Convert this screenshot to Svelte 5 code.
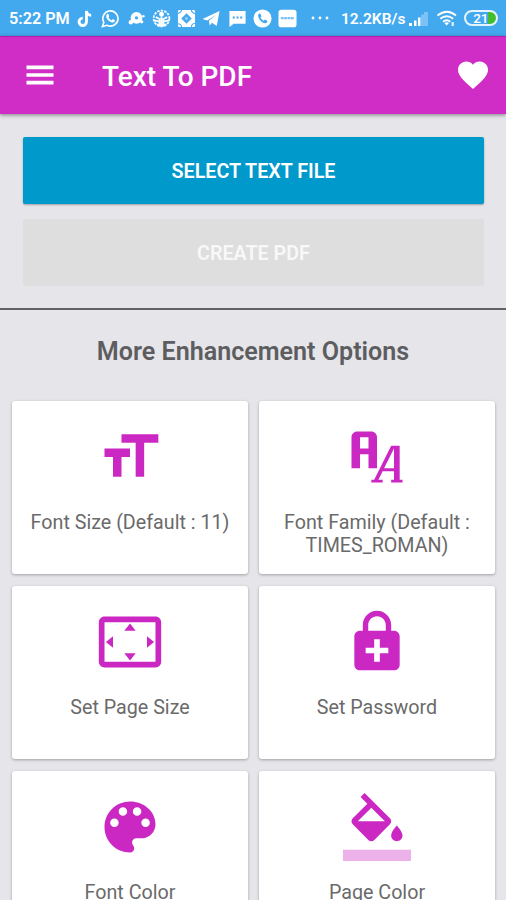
<script>
  const options = [
    {
      label: 'Font Size (Default : 11)',
      icon: 'M9 4v3h5v12h3V7h5V4H9zm-6 8h3v7h3v-7h3V9H3v3z'
    },
    {
      label: 'Font Family (Default : TIMES_ROMAN)',
      icon: 'M17 8H20V20H21V21H17V20H18V17H14L12.5 20H14V21H10V20H11L17 8M18 9L14.5 16H18V9M5 3H10C11.11 3 12 3.89 12 5V16H9V11H6V16H3V5C3 3.89 3.89 3 5 3M6 5V9H9V5H6Z'
    },
    {
      label: 'Set Page Size',
      icon: 'M12.01 5.5L10 8h4l-1.99-2.5zM18 10v4l2.5-1.99L18 10zM6 10l-2.5 2.01L6 14v-4zm8 6h-4l2.01 2.5L14 16zm7-13H3c-1.1 0-2 .9-2 2v14c0 1.1.9 2 2 2h18c1.1 0 2-.9 2-2V5c0-1.1-.9-2-2-2zm0 16.01H3V4.99h18v14.02z'
    },
    {
      label: 'Set Password',
      icon: 'M18 8h-1V6c0-2.76-2.24-5-5-5S7 3.24 7 6v2H6c-1.1 0-2 .9-2 2v10c0 1.1.9 2 2 2h12c1.1 0 2-.9 2-2V10c0-1.1-.9-2-2-2zM8.9 6c0-1.71 1.39-3.1 3.1-3.1s3.1 1.39 3.1 3.1v2H8.9V6zM16 16h-3v3h-2v-3H8v-2h3v-3h2v3h3v2z'
    },
    {
      label: 'Font Color',
      icon: 'M12 3c-4.97 0-9 4.03-9 9s4.03 9 9 9c.83 0 1.5-.67 1.5-1.5 0-.39-.15-.74-.39-1.01-.23-.26-.38-.61-.38-.99 0-.83.67-1.5 1.5-1.5H16c2.76 0 5-2.24 5-5 0-4.42-4.03-8-9-8zm-5.5 9c-.83 0-1.5-.67-1.5-1.5S5.67 9 6.5 9 8 9.67 8 10.5 7.33 12 6.5 12zm3-4C8.67 8 8 7.33 8 6.5S8.67 5 9.5 5s1.5.67 1.5 1.5S10.33 8 9.5 8zm5 0c-.83 0-1.5-.67-1.5-1.5S13.67 5 14.5 5s1.5.67 1.5 1.5S15.33 8 14.5 8zm3 4c-.83 0-1.5-.67-1.5-1.5S16.67 9 17.5 9s1.5.67 1.5 1.5-.67 1.5-1.5 1.5z'
    },
    {
      label: 'Page Color', bar: true,
      icon: 'M16.56 8.94L7.62 0 6.21 1.41l2.38 2.38-5.15 5.15c-.59.59-.59 1.54 0 2.12l5.5 5.5c.29.29.68.44 1.06.44s.77-.15 1.06-.44l5.5-5.5c.59-.58.59-1.53 0-2.12zM5.21 10L10 5.21 14.79 10H5.21zM19 11.5s-2 2.17-2 3.5c0 1.1.9 2 2 2s2-.9 2-2c0-1.33-2-3.5-2-3.5z'
    }
  ];
</script>

<div class="screen">
  <div class="status">
    <span class="time">5:22 PM</span>
    <div class="notes">
      <svg class="n" viewBox="0 0 20 20"><path d="M11 2c.4 3 2.100 4.700 5 4.700M11 2V13.500a3.900 3.900 0 1 1-3.900-3.900" fill="none" stroke="#fff" stroke-width="3" /></svg>
      <svg class="n" viewBox="0 0 20 20"><path d="M1.500 18.500 3 14a8 8 0 1 1 3.200 3.100z" fill="none" stroke="#fff" stroke-width="1.700" /><path d="M6.200 5.600c1-1 1.700-.5 2.400 1.700.1.600-.4.900-.8 1.500.7 1.500 1.800 2.400 3.400 3.200.6-.6.900-1.300 1.500-1.100 2.300 1 2.400 1.300 1.400 2.500-1.200 1.200-3 .9-5.300-.6C6.100 11 4.500 8.200 6.200 5.600z" fill="#fff" /></svg>
      <svg class="n" viewBox="0 0 20 20"><g fill="#fff"><circle cx="10" cy="9.300" r="6.200" /><circle cx="4" cy="14" r="2.300" /><circle cx="17.300" cy="7.500" r="1.300" /><circle cx="15.500" cy="13.500" r="1.700" /></g><circle cx="10" cy="9.300" r="1.800" fill="#43a9ef" /></svg>
      <svg class="n" viewBox="0 0 20 20"><circle cx="10" cy="10" r="8.300" fill="none" stroke="#fff" stroke-width="1.800" stroke-dasharray="2.600 1.200" /><circle cx="10" cy="5.600" r="2.600" fill="#fff" /><path d="M10 8v10M4 8.500l4 2V16M16 8.500l-4 2V16M2 12l5 1M18 12l-5 1" fill="none" stroke="#fff" stroke-width="1.900" /><path d="M4 15.500h12l-3 3H7z" fill="#fff" /></svg>
      <svg class="n" viewBox="0 0 20 20"><rect x="1" y="1" width="18" height="18" rx="1.500" fill="#fff" /><path d="M10 4.500 15.500 10 10 15.500 4.500 10z" fill="#43a9ef" /><path d="M10 8 12 10 10 12 8 10z" fill="#fff" opacity=".4" /><path d="M1 4.500Q4 4.500 5 1M15 1q.5 3 4 4M1 15.500q3 0 4 3.500M15 19q.5-3.500 4-4" fill="none" stroke="#43a9ef" stroke-width="1.100" /></svg>
      <svg class="n" viewBox="0 0 20 20"><path d="M.5 10.500 18.500 2 15.500 18l-5-3.500-2.300 2.800-1-5L15 6 5.500 12z" fill="#fff" /></svg>
      <svg class="n" viewBox="0 0 20 20"><path d="M1.500 2h17v13.500H6L1.500 19z" fill="#fff" /><path d="M5 9h2.200M8.900 9h2.200M12.800 9H15" stroke="#43a9ef" stroke-width="2" /></svg>
      <svg class="n" viewBox="0 0 20 20"><circle cx="10" cy="10" r="9.500" fill="#fff" /><path d="M5.500 5.800 7.500 4.600 9 7.500 7.800 9c.8 1.500 1.800 2.500 3.400 3.400l1.400-1.300 2.800 1.600-1.200 2C10.500 16.400 4.700 10.200 5.500 5.800z" fill="#43a9ef" /></svg>
      <svg class="n" viewBox="0 0 20 20"><rect x=".5" y=".8" width="19" height="18.400" rx="3" fill="#fff" /><path d="M3 9.500h14" stroke="#43a9ef" stroke-width="2.400" stroke-dasharray="3 .5" opacity=".7" /></svg>
    </div>
    <svg class="dots" viewBox="0 0 18 4"><g fill="#fff"><circle cx="2" cy="2" r="1.400" /><circle cx="9" cy="2" r="1.400" /><circle cx="16" cy="2" r="1.400" /></g></svg>
    <span class="speed">12.2KB/s</span>
    <svg class="signal" viewBox="0 0 20 16"><g fill="#fff"><rect x="0" y="12" width="3" height="3" /><rect x="5" y="9.500" width="2.500" height="5.500" /><rect x="9" y="6.500" width="2.500" height="8.500" /><rect x="12" y="3.500" width="3" height="11.500" opacity=".3" /><rect x="15" y="1" width="4" height="14" opacity=".3" /></g></svg>
    <svg class="wifi" viewBox="0 0 22 18"><g fill="none" stroke="#fff" stroke-width="1.900"><path d="M1.500 6.500q9.500-7.500 18.500 0" /><path d="M4.300 9.700q6.500-5 12.800 0" /><path d="M7 12.700q3.700-2.800 7.300 0" /></g><path d="M8.300 14q2.400-1.500 4.700 0l-2.300 2.600z" fill="#fff" /><path d="M16.700 13v4" stroke="#fff" stroke-width="2.400" opacity=".8" /></svg>
    <div class="battery"><span>21</span></div>
  </div>

  <header>
    <svg class="bar-icon menu" viewBox="0 0 24 24"><path d="M3 18.300h18v-2.500H3v2.500zm0-5.100h18v-2.400H3v2.400zm0-7.500v2.500h18V5.700H3z" fill="#fff" /></svg>
    <h1>Text To PDF</h1>
    <svg class="bar-icon heart" viewBox="0 0 24 24"><path d="M12 21.350l-1.450-1.320C5.400 15.360 2 12.280 2 8.500 2 5.420 4.420 3 7.500 3c1.740 0 3.410.81 4.500 2.090C13.090 3.810 14.760 3 16.500 3 19.580 3 22 5.420 22 8.500c0 3.780-3.400 6.860-8.550 11.540L12 21.350z" fill="#fff" /></svg>
  </header>

  <div class="actions">
    <button class="select">SELECT TEXT FILE</button>
    <button class="create" disabled>CREATE PDF</button>
  </div>

  <h2>More Enhancement Options</h2>

  <div class="grid">
    {#each options as option}
      <div class="card">
        <svg viewBox="0 0 24 24">
          <path fill-rule="evenodd" d={option.icon} />
          {#if option.bar}<path d="M0 20h24v4H0z" opacity=".36" />{/if}
        </svg>
        <p>{option.label}</p>
      </div>
    {/each}
  </div>
</div>

<style>
  :global(body) { margin: 0; overflow: hidden; }
  .screen {
    box-sizing: border-box;
    width: 506px;
    height: 900px;
    overflow: hidden;
    background: #e5e5ea;
    font-family: Roboto, 'Liberation Sans', sans-serif;
    color: #5c5c5e;
  }
  .status {
    display: flex;
    align-items: center;
    box-sizing: border-box;
    height: 36px;
    padding-left: 9px;
    background: #43a9ef;
    color: #fff;
    font-size: 16.200px;
    font-weight: 600;
    white-space: nowrap;
  }
  .time { width: 67px; padding-top: 1px; }
  .notes { display: flex; gap: 6.300px; }
  .n { width: 19px; height: 19px; flex: none; }
  .dots { width: 18px; height: 4px; margin-left: 14px; }
  .speed { width: 67px; margin-left: 11.500px; padding-top: 2px; font-size: 15.500px; }
  .signal { width: 20px; height: 16px; margin-left: 1px; margin-top: 1px; }
  .wifi { width: 22px; height: 18px; margin-left: 7px; }
  .battery {
    display: flex;
    align-items: center;
    justify-content: center;
    box-sizing: border-box;
    width: 34px;
    height: 16px;
    margin-left: 6px;
    border: 2px solid #e4f3fd;
    border-radius: 8px;
    background: linear-gradient(90deg, transparent 22px, #42bd2d 22px);
    font-size: 13.500px;
    font-weight: 500;
    line-height: 14px;
  }
  header {
    position: relative;
    display: flex;
    align-items: center;
    box-sizing: border-box;
    height: 78px;
    padding: 0 15px 0 22px;
    background: #cf2dc5;
    border-top: 1px solid #b51cae;
    box-shadow: 0 1px 4px rgba(0, 0, 0, .45);
  }
  .bar-icon { width: 36px; height: 36px; flex: none; }
  .menu { margin-bottom: 2px; }
  .heart { margin-bottom: 2px; }
  h1 {
    flex: 1;
    margin: 2px 0 0 44px;
    color: #fff;
    font-size: 28px;
    line-height: 34px;
    font-weight: 500;
  }
  .actions {
    display: flex;
    flex-direction: column;
    gap: 15px;
    box-sizing: border-box;
    height: 196px;
    padding: 23px 22px 0 23px;
    border-bottom: 2px solid #626266;
  }
  button {
    height: 67px;
    padding: 2px 0 0;
    border: 0;
    border-radius: 2px;
    color: #fff;
    font: 600 19.700px Roboto, 'Liberation Sans', sans-serif;
  }
  .select { background: #0099cc; box-shadow: 0 1px 2px rgba(0, 0, 0, .3); }
  .create { background: #dedede; color: #f8f8f8; }
  h2 {
    margin: 0;
    height: 91px;
    color: #5d5d60;
    font-size: 25.100px;
    font-weight: 600;
    line-height: 83px;
    text-align: center;
  }
  .grid {
    display: grid;
    grid-template-columns: 236px 236px;
    grid-auto-rows: 173px;
    gap: 12px 11px;
    padding-left: 12px;
  }
  .card {
    display: flex;
    flex-direction: column;
    align-items: center;
    box-sizing: border-box;
    padding: 22px 10px 0;
    border-radius: 3px;
    background: #fff;
    box-shadow: 0 1px 3px rgba(0, 0, 0, .3);
  }
  .card svg { width: 68px; height: 68px; flex: none; fill: #cb28c3; }
  p {
    margin: 20px 0 0;
    color: #6a6a6a;
    font-size: 19.700px;
    line-height: 23px;
    text-align: center;
  }
</style>
